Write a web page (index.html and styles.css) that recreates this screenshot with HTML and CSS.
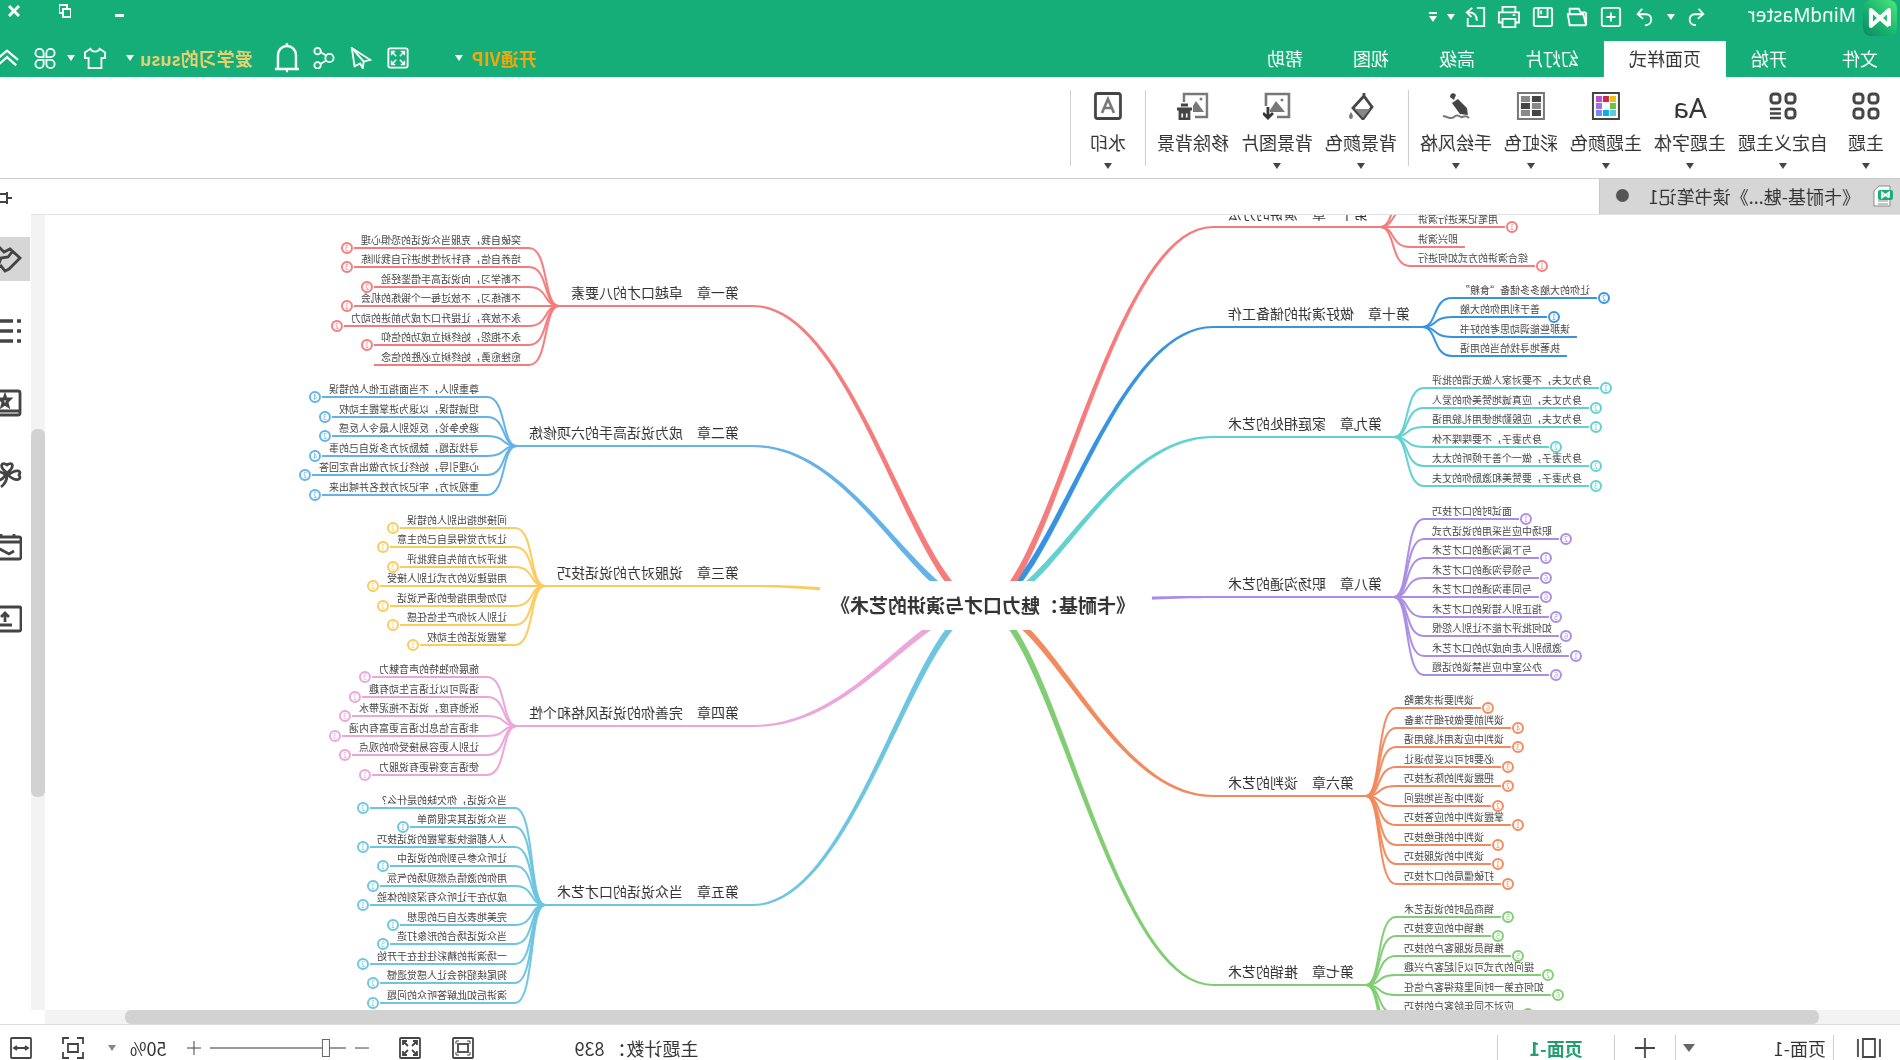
FILE: index.html
```html
<!DOCTYPE html>
<html lang="zh-CN">
<head>
<meta charset="utf-8">
<title>MindMaster</title>
<link rel="stylesheet" href="styles.css">
</head>
<body>
<div class="app">
  <header class="header">
    <div class="titlebar">
      <div class="brand">
        <svg class="logo" viewBox="0 0 34 36" aria-hidden="true">
          <defs><linearGradient id="lg" x1="0" y1="0" x2="1" y2="1"><stop offset="0" stop-color="#4fe87c"/><stop offset=".5" stop-color="#1cb870"/><stop offset="1" stop-color="#0a8a62"/></linearGradient></defs>
          <rect width="34" height="36" rx="8" fill="url(#lg)"/>
          <path d="M8 26V10l18 16V10L8 26" fill="none" stroke="#fff" stroke-width="4" stroke-linejoin="round"/>
        </svg>
        <span class="brand-name">MindMaster</span>
      </div>
      <div class="quick">
        <button class="cell narrow" aria-label="撤销"><svg class="ico" viewBox="0 0 24 24"><path d="M9 3L4 9l6 5M4 9h9c8 0 8 12-1 12"/></svg></button>
        <button class="cell mini" aria-label="撤销列表"><i class="caret"></i></button>
        <button class="cell" aria-label="重做"><svg class="ico" viewBox="0 0 24 24"><path d="M15 3l5 6-6 5M20 9h-9c-8 0-8 12 1 12"/></svg></button>
        <button class="cell" aria-label="新建"><svg class="ico" viewBox="0 0 24 24"><rect x="2" y="2" width="20" height="20" rx="2"/><path d="M12 7v10M7 12h10"/></svg></button>
        <button class="cell" aria-label="打开"><svg class="ico" viewBox="0 0 24 24"><path d="M2 21h18l2-12H5L2 21V8l1-1h5l2-4h10v6"/></svg></button>
        <button class="cell" aria-label="保存"><svg class="ico" viewBox="0 0 24 24"><rect x="2" y="2" width="20" height="20" rx="2"/><path d="M7 2v10h10V2M14 5v4"/></svg></button>
        <button class="cell" aria-label="打印"><svg class="ico" viewBox="0 0 24 24"><path d="M5 7V1h14v6M5 18H1V7h22v11h-4M5 14h14v9H5zM5 10h3"/></svg></button>
        <button class="cell narrow" aria-label="导出"><svg class="ico" viewBox="0 0 24 24"><path d="M11 2H3v20h18v-9M21 7c-7-1-10 4-10 9M16 2l6 5-5 5"/></svg></button>
        <button class="cell mini" aria-label="导出选项"><i class="caret"></i></button>
        <button class="cell mini more" aria-label="自定义快速访问"><i class="bar"></i><i class="caret"></i></button>
      </div>
      <div class="window-buttons">
        <button class="win" aria-label="最小化"><svg viewBox="0 0 12 14"><path d="M1 10h9v3H1z" fill="#fff"/></svg></button>
        <button class="win" aria-label="还原"><svg viewBox="0 0 12 14"><path d="M9 9h3V1H4v4M0 5h8v8H0z" fill="none" stroke="#fff" stroke-width="2"/></svg></button>
        <button class="win last" aria-label="关闭"><svg viewBox="0 0 12 14"><path d="M1 2l10 10M11 2L1 12" stroke="#fff" stroke-width="3"/></svg></button>
      </div>
    </div>
    <div class="menubar">
      <nav class="menus">
        <button class="menu file">文件</button>
        <button class="menu">开始</button>
        <button class="menu active">页面样式</button>
        <button class="menu">幻灯片</button>
        <button class="menu">高级</button>
        <button class="menu">视图</button>
        <button class="menu">帮助</button>
      </nav>
      <div class="account">
        <button class="vip">开通VIP<i class="caret"></i></button>
        <button class="tool" aria-label="全屏"><svg class="ico" viewBox="0 0 24 24"><rect x="1.5" y="1.5" width="21" height="21" rx="2"/><path d="M5 9V5h4M5 5l5 5M15 5h4v4M19 5l-5 5M5 15v4h4M5 19l5-5M19 15v4h-4M19 19l-5-5" stroke-width="1.6"/></svg></button>
        <button class="tool" aria-label="发送"><svg class="ico" viewBox="0 0 24 24"><path d="M22 1L2 14l7 2 1 7 3-5 6 3L22 1 9 16"/></svg></button>
        <button class="tool" aria-label="分享"><svg class="ico" viewBox="0 0 24 24"><circle cx="6" cy="12" r="4.500"/><circle cx="19" cy="4.500" r="3.500"/><circle cx="19" cy="20" r="3.500"/><path d="M9 9.500l7-4M9 14.500l7 4"/></svg></button>
        <button class="tool" aria-label="通知"><svg class="ico bell" viewBox="0 0 24 30"><path d="M3 26V12a9 9 0 0 1 18 0v14M0 26h24M12 0v3M11 28h2" stroke-width="2.400"/></svg></button>
        <button class="user">爱学习的susu<i class="caret"></i></button>
        <button class="pair" aria-label="皮肤"><svg class="ico wide" viewBox="0 0 26 24"><path d="M8 2L2 6v6h4v11h14V12h4V6l-6-4c-2 4-8 4-10 0z"/></svg><i class="caret"></i></button>
        <button class="apps" aria-label="应用"><svg class="ico wide" viewBox="0 0 26 24"><path d="M11.500 11H7a4.500 4.500 0 1 1 4.500-4.500zM14.500 11H19a4.500 4.500 0 1 0-4.500-4.500zM11.500 14H7a4.500 4.500 0 1 0 4.500 4.500zM14.500 14H19a4.500 4.500 0 1 1-4.500 4.500z"/></svg></button>
        <button class="fold" aria-label="收起功能区"><svg class="ico" viewBox="0 0 24 24"><path d="M0 14L12 4l12 10M2 20l10-9 10 9" stroke-width="2.400"/></svg></button>
      </div>
    </div>
  </header>

  <section class="ribbon" aria-label="页面样式">
    <div class="group">
      <button class="act first"><svg class="pic" viewBox="0 0 28 28"><g fill="none" stroke="#444" stroke-width="3"><rect x="2" y="2" width="9" height="9" rx="3"/><rect x="17" y="2" width="9" height="9" rx="3"/><rect x="2" y="17" width="9" height="9" rx="3"/><rect x="17" y="17" width="9" height="9" rx="3"/></g></svg>主题<i class="caret dark"></i></button>
      <button class="act"><svg class="pic" viewBox="0 0 28 28"><g fill="none" stroke="#444" stroke-width="3"><rect x="2" y="2" width="9" height="9" rx="3"/><rect x="17" y="2" width="9" height="9" rx="3"/><rect x="2" y="17" width="9" height="9" rx="3"/><path d="M16 17h11M16 21.500h11M16 26h11" stroke-width="2.400"/></g></svg>自定义主题<i class="caret dark"></i></button>
      <button class="act"><span class="aa" aria-hidden="true">Aa</span>主题字体<i class="caret dark"></i></button>
      <button class="act"><svg class="pic" viewBox="0 0 28 28"><rect x="1" y="1" width="26" height="26" fill="#fff" stroke="#444" stroke-width="2"/><path d="M4 4h6v6H4z" fill="#e8c010"/><path d="M11 4h6v6h-6z" fill="#cf2552"/><path d="M18 4h6v6h-6z" fill="#c050d0"/><path d="M4 11h6v6H4z" fill="#6cc04a"/><path d="M18 11h6v6h-6z" fill="#a070e0"/><path d="M4 18h6v6H4z" fill="#60c8d8"/><path d="M11 18h6v6h-6z" fill="#00b0f0"/><path d="M18 18h6v6h-6z" fill="#7088f8"/></svg>主题颜色<i class="caret dark"></i></button>
      <button class="act"><svg class="pic" viewBox="0 0 28 28"><rect x="1" y="1" width="26" height="26" fill="#fff" stroke="#777" stroke-width="2"/><path d="M4 4h9v6H4zM15 11h9v6h-9zM4 18h9v6H4z" fill="#444"/><path d="M15 4h9v6h-9zM4 11h9v6H4zM15 18h9v6h-9z" fill="#888"/></svg>彩虹色<i class="caret dark"></i></button>
      <button class="act"><svg class="pic" viewBox="0 0 28 28"><path d="M14 3c2-3 6-2 6 2l-4 3zM12 7l6 4-8 11-8 1 1-7z" fill="#444"/><path d="M1 26c4-4 6 0 8-1s4-3 7 0 5 0 11-1" fill="none" stroke="#777" stroke-width="2"/></svg>手绘风格<i class="caret dark"></i></button>
    </div>
    <div class="group">
      <button class="act"><svg class="pic" viewBox="0 0 28 28"><path d="M11 1v5M11 4l11 12-10 11L3 15z" fill="none" stroke="#444" stroke-width="2.800"/><path d="M5 17h15l-8 9z" fill="#888"/><path d="M24 20c3 4 2 7 0 7s-3-3 0-7z" fill="#777"/></svg>背景颜色<i class="caret dark"></i></button>
      <button class="act"><svg class="pic" viewBox="0 0 28 28"><path d="M14 25H2V2h23v12" fill="none" stroke="#777" stroke-width="2.600"/><path d="M6 20l9-11 6 9v2z" fill="#777"/><circle cx="9" cy="8" r="1.500" fill="#777"/><path d="M23 15v11M18 21l5 5 5-5" fill="none" stroke="#333" stroke-width="2.800"/></svg>背景图片<i class="caret dark"></i></button>
      <button class="act"><svg class="pic remove" viewBox="0 0 32 28"><path d="M14 25H2V2h23v8" fill="none" stroke="#777" stroke-width="2.400"/><path d="M5 20l8-11 3 5v6z" fill="#777"/><circle cx="8" cy="7" r="1.500" fill="#777"/><path d="M17 17h15M21 13h7M20 20v7h9v-7zM24.500 19v8" fill="none" stroke="#444" stroke-width="2.800"/></svg>移除背景<i class="caret none"></i></button>
    </div>
    <div class="group">
      <button class="act water"><svg class="pic" viewBox="0 0 28 28"><rect x="1.500" y="1.500" width="25" height="25" rx="2" fill="none" stroke="#444" stroke-width="2.800"/><path d="M8 21l6-14 6 14M10 16h8" fill="none" stroke="#777" stroke-width="2.600"/></svg>水印<i class="caret dark"></i></button>
    </div>
  </section>

  <div class="work">
    <main class="stage">
      <div class="doc-tabs">
        <button class="doc-tab">
          <svg class="doc-icon" viewBox="0 0 20 22"><path d="M3 1h11l5 5v15H3z" fill="#fff" stroke="#888"/><path d="M5 16h10M5 19h10" stroke="#888"/><rect x="0" y="5" width="15" height="10" rx="2" fill="#12b07a"/><path d="M4 12.500V7.500l7 5V7.500l-7 5" fill="none" stroke="#fff" stroke-width="1.800"/></svg>
          <span class="doc-name">《卡耐基-魅...》读书笔记1</span>
          <i class="dot"></i>
        </button>
      </div>
      <div class="view">
        <div class="board">
        <svg class="map" id="map" role="img" aria-label="思维导图"></svg>
        </div>
        <div class="vscroll"><i class="pad-top"></i><i class="thumb"></i><i class="pad-bottom"></i></div>
      </div>
      <div class="hscroll"><i class="pad-left"></i><i class="thumb"></i><i class="pad-right"></i></div>
    </main>
    <aside class="side">
      <button class="pin" aria-label="固定"><svg viewBox="0 0 24 14"><path d="M0 7h5M5 1v12M5 3h13v8H5M18 1v12" fill="none" stroke="#444" stroke-width="2"/></svg></button>
      <button class="panel on" aria-label="样式"><svg viewBox="0 0 28 28"><path d="M2 13L12 4l6 3 4-4 8 8v7l-6 5-3-2-4 5-4-2zM10 7l4 5 7 1 3 8"/></svg></button>
      <button class="panel" aria-label="大纲"><svg viewBox="0 0 28 28"><path d="M9 4h19M9 14h19M9 24h19M1 4h4M1 14h4M1 24h4" stroke-width="3.600"/></svg></button>
      <button class="panel" aria-label="图标"><svg viewBox="0 0 28 28"><rect x="2" y="2" width="26" height="24" rx="2"/><path d="M2 22h26M17 7l1 3h4l-3 3 1 4-3-2-3 2 1-4-3-3h4z"/></svg></button>
      <button class="panel" aria-label="剪贴画"><svg viewBox="0 0 28 28"><path d="M15 12c-9-7-5-12 0-8 5-4 9 1 0 8zM14 14C5 7 0 10 3 14c-3 4 2 8 11 0zM16 14c9-6 12-3 9 1 3 5-2 7-9-1zM15 14c0 5 2 9 6 12"/></svg></button>
      <button class="panel" aria-label="任务"><svg viewBox="0 0 28 28"><rect x="1" y="4" width="27" height="22" rx="2"/><path d="M1 9h27M8 1v4M21 1v4M8 18l5 3 11-6"/></svg></button>
      <button class="panel" aria-label="附件"><svg viewBox="0 0 28 28"><rect x="1" y="2" width="27" height="24" rx="2"/><path d="M10 20h14M17 17V8M13 12l4-4 4 4"/></svg></button>
    </aside>
  </div>

  <footer class="status">
    <button class="st pages" aria-label="页面列表"><svg viewBox="0 0 24 22"><path d="M1 2v18M23 2v18M6 2h12v18H6z"/></svg></button>
    <label class="page-pick"><select class="page-select" aria-label="页面"><option>页面-1</option></select><i class="caret big"></i></label>
    <button class="st add" aria-label="新增页面"><svg viewBox="0 0 20 20"><path d="M10 0v20M0 10h20"/></svg></button>
    <button class="page-tab">页面-1</button>
    <span class="spacer"></span>
    <span class="count">主题计数： 839</span>
    <button class="st" aria-label="适合窗口"><svg viewBox="0 0 22 22"><rect x="1" y="1" width="20" height="20" rx="1"/><rect x="6" y="7" width="10" height="8"/><path d="M4 7V4h3M15 4h3v3M4 15v3h3M15 18h3v-3" stroke-width="1"/></svg></button>
    <button class="st full" aria-label="全屏显示"><svg viewBox="0 0 22 22"><rect x="1" y="1" width="20" height="20" rx="1"/><path d="M4 8V4h4M4 4l5 5M14 4h4v4M18 4l-5 5M4 14v4h4M4 18l5-5M18 14v4h-4M18 18l-5-5"/></svg></button>
    <button class="st sign" aria-label="缩小"><svg viewBox="0 0 14 14"><path d="M0 7h14"/></svg></button>
    <input class="zoom" type="range" min="0" max="100" value="12" aria-label="缩放">
    <button class="st sign" aria-label="放大"><svg viewBox="0 0 14 14"><path d="M0 7h14M7 0v14"/></svg></button>
    <button class="percent">50%<i class="caret grey"></i></button>
    <button class="st page-fit" aria-label="适合页面"><svg viewBox="0 0 22 22"><path d="M1 7V1h6M15 1h6v6M1 15v6h6M15 21h6v-6M6 7h10v8H6z"/></svg></button>
    <button class="st fit" aria-label="适合宽度"><svg viewBox="0 0 22 22"><rect x="1" y="1" width="20" height="20" rx="1"/><path d="M4 11h14M7 9l-3 2 3 2M15 9l3 2-3 2"/></svg></button>
  </footer>
</div>
<script src="map.js"></script>
</body>
</html>
```
FILE: styles.css
```css
* { box-sizing: border-box; }

body {
  margin: 0;
  overflow: hidden;
  background: #fff;
  color: #333;
  font: 18px/24px "Noto Sans CJK SC", sans-serif;
}

button {
  display: flex;
  align-items: center;
  justify-content: center;
  padding: 0;
  border: 0;
  background: none;
  color: inherit;
  font: inherit;
  white-space: nowrap;
}

svg { display: block; flex: none; }

/* the whole window is shown as in a mirror */
.app {
  display: flex;
  flex-direction: column;
  height: 100vh;
  transform: scaleX(-1);
}

/* carets */
.caret {
  flex: none;
  border: 4px solid transparent;
  border-top: 6px solid #fff;
  border-bottom: 0;
}
.caret.dark { border-top-color: #444; }
.caret.grey { border-top-color: #888; }
.caret.big { border-width: 8px 6px 0; border-top-color: #666; }
.caret.none { visibility: hidden; }
.more { flex-direction: column; gap: 2px; }
.bar { width: 8px; height: 2px; background: #fff; }

/* header */
.header { flex: none; background: #16ae78; color: #fff; }
.titlebar { display: flex; height: 41px; padding-left: 3px; }
.brand { display: flex; align-items: flex-start; gap: 7px; width: 185px; }
.logo { width: 34px; height: 36px; }
.brand-name { font: 19px/30px "Noto Sans", sans-serif; }
.quick { display: flex; height: 34px; }
.cell { width: 34px; }
.cell.narrow { width: 32px; }
.cell.mini { width: 18px; }
.ico {
  width: 22px;
  height: 22px;
  fill: none;
  stroke: #fff;
  stroke-width: 2;
}
.ico.wide { width: 24px; }
.ico.bell { width: 24px; height: 30px; }
.window-buttons { display: flex; height: 22px; margin-left: auto; }
.win { width: 54px; }
.win svg { width: 12px; height: 14px; }
.win.last { width: 38px; padding-left: 18px; justify-content: flex-start; }

.menubar { display: flex; justify-content: space-between; height: 36px; }
.menus { display: flex; }
.menu { padding: 0 25px 2px; }
.menu.file { padding: 0 30px 2px 22px; }
.menu.active { background: #fff; color: #333; }
.account { display: flex; overflow: hidden; padding-bottom: 2px; }
.vip { gap: 9px; margin-right: 38px; color: #f5a60a; font-weight: 700; }
.tool { width: 37px; }
.user { gap: 6px; margin: 0 19px 0 16px; color: #e6d070; font-weight: 700; }
.pair { gap: 8px; }
.apps { margin: 0 13px 0 10px; }
.fold { width: 20px; justify-content: flex-start; overflow: hidden; }
.fold .ico { width: 26px; }

/* ribbon */
.ribbon {
  display: flex;
  flex: none;
  height: 102px;
  padding-top: 13px;
  border-bottom: 1px solid #ccc;
}
.group {
  display: flex;
  gap: 12px;
  height: 76px;
  padding: 0 11px;
  border-right: 1px solid #ccc;
}
.act { flex-direction: column; justify-content: flex-start; line-height: 26px; padding-top: 2px; }
.act.first { margin: 0 8px 0 5px; }
.act.water { margin: 0 8px; }
.pic { width: 28px; height: 28px; margin-bottom: 9px; }
.pic.remove { width: 32px; }
.aa { height: 28px; margin-bottom: 9px; font: 28px/30px "Noto Sans", sans-serif; }
.act .caret { margin-top: 8px; }

/* document area */
.work { display: flex; flex: 1; min-height: 0; }
.stage { display: flex; flex: 1; flex-direction: column; min-width: 0; }
.doc-tabs { flex: none; height: 36px; border-bottom: 1px solid #e2e2e2; }
.doc-tab {
  justify-content: flex-start;
  width: 301px;
  height: 35px;
  padding: 0 0 2px 7px;
  background: #d6d6d6;
  border-right: 1px solid #c8c8c8;
}
.doc-icon { width: 20px; height: 22px; margin-right: 13px; }
.doc-name { flex: 1; text-align: left; }
.dot { width: 13px; height: 13px; margin-right: 16px; border-radius: 50%; background: #555; }
.view { display: flex; flex: 1; min-height: 0; }
.board { flex: 1; min-width: 0; overflow: hidden; }
.map { width: 100%; height: 100%; }
.vscroll { display: flex; flex-direction: column; width: 14px; background: #f3f3f3; }
.hscroll { display: flex; flex: none; height: 14px; margin-right: 14px; background: #f3f3f3; }
.thumb { border-radius: 6px; background: #d2d2d2; }
.pad-top { flex: 214; }
.vscroll .thumb { flex: 368; }
.pad-bottom { flex: 213; }
.pad-left { flex: 81; }
.hscroll .thumb { flex: 1694; }
.pad-right { flex: 80; }

/* mind map */
.topic { fill: #333; font-size: 14px; }
.leaf { fill: #444; font-size: 10px; }
.line { fill: none; stroke: currentColor; stroke-width: 2; }
.taper { fill: currentColor; }
.badge { fill: #fff; stroke: currentColor; stroke-width: 2; }
.badge-text { fill: currentColor; font-size: 7px; text-anchor: middle; }
.root-box { fill: #fff; }
.root-text { fill: #333; font-size: 19px; font-weight: 700; text-anchor: middle; }
.end { text-anchor: end; }

/* side panel */
.side { display: flex; flex: none; flex-direction: column; gap: 28px; width: 31px; overflow: hidden; }
.pin { justify-content: flex-start; height: 30px; padding: 8px 0 0 19px; }
.pin svg { width: 24px; height: 14px; }
.panel { justify-content: flex-start; height: 44px; margin-left: 1px; padding-left: 8px; }
.panel.on { background: #d6d6d6; }
.panel svg { width: 28px; height: 28px; fill: none; stroke: #444; stroke-width: 2.8; }

/* status bar */
.status {
  display: flex;
  flex: none;
  align-items: center;
  height: 36px;
  padding-top: 10px;
  border-top: 1px solid #ddd;
}
.st { width: 52px; height: 24px; }
.st svg { width: 22px; height: 22px; fill: none; stroke: #444; stroke-width: 1.8; }
.st.pages { width: 67px; height: 26px; padding-right: 4px; border-right: 1px solid #ccc; }
.st.pages svg { width: 24px; }
.page-pick { display: flex; align-items: center; width: 158px; height: 26px; padding: 0 7px; border-right: 1px solid #ccc; }
.page-select {
  flex: 1;
  padding: 0;
  border: 0;
  background: none;
  color: #333;
  font: inherit;
  appearance: none;
}
.st.add { width: 61px; height: 26px; border-right: 1px solid #ccc; }
.st.add svg { width: 20px; height: 20px; }
.page-tab { width: 117px; height: 26px; border-right: 1px solid #ccc; color: #1f9c70; font-weight: 700; }
.spacer { flex: 1; }
.count { margin-right: 86px; white-space: pre; }
.st.full { width: 53px; margin-right: 6px; }
.st.sign { width: 32px; }
.st.sign svg { width: 14px; height: 14px; stroke-width: 1; }
.zoom { width: 136px; height: 18px; margin: 0; background: none; appearance: none; }
.zoom::-webkit-slider-runnable-track { height: 2px; background: #999; }
.zoom::-webkit-slider-thumb {
  width: 8px;
  height: 18px;
  margin-top: -8px;
  border: 1px solid #666;
  background: #fff;
  appearance: none;
}
.percent { gap: 14px; margin: 0 5px 0 11px; }
.st.page-fit { width: 60px; }
.st.fit { width: 43px; }
```
FILE: map.js
```js
const SVG = "http://www.w3.org/2000/svg";
const map = document.getElementById("map");

// root node centre, branch geometry
const ROOT = { x: 917, y: 391, w: 332, h: 49, text: "《卡耐基：魅力口才与演讲的艺术》" };
const STEP = 19.5;

// side: 1 grows to the right of the root, -1 to the left
const branches = [
  { side: 1, y: 91, color: "#f47c7c", text: "第一章　卓越口才的八要素", items: [
    ["突破自我，克服当众说话的恐惧心理", 3], ["培养自信，有针对性地进行自我训练", 3],
    ["不断学习，向说话高手借鉴经验", 2], ["不断练习，不放过每一个锻炼的机会", 1],
    ["永不放弃，让提升口才成为前进的动力", 2], ["永不抱怨，始终树立成功的信仰", 1],
    ["愈挫愈勇，始终树立必胜的信念"]] },
  { side: 1, y: 231, color: "#64b2e8", text: "第二章　成为说话高手的六项修炼", items: [
    ["尊重别人，不当面指正他人的错误", 4], ["坦诚错误，以退为进掌握主动权", 3],
    ["避免争论，反驳别人最令人反感", 2], ["寻找话题，鼓励对方多说自己的事", 4],
    ["心理引导，始终让对方做出肯定回答", 2], ["重视对方，牢记对方姓名并喊出来", 2]] },
  { side: 1, y: 371, color: "#fbcb5c", text: "第三章　说服对方的说话技巧", items: [
    ["间接地指出别人的错误", 2], ["让对方觉得是自己的主意", 1], ["批评对方前先自我批评", 3],
    ["用提建议的方式让别人接受", 2], ["切勿使用指使的语气说话", 2], ["让别人对你产生信任感", 1],
    ["掌握说话的主动权", 1]] },
  { side: 1, y: 511, color: "#eba6da", text: "第四章　完善你的说话风格和个性", items: [
    ["施展你独特的声音魅力", 3], ["语调可以让语言生动有趣", 2], ["张弛有度，说话不拖泥带水", 3],
    ["非语言信息比语言更富有内涵", 3], ["让别人更容易接受你的观点", 2], ["使语言变得更有说服力", 1]] },
  { side: 1, y: 690, color: "#6ec5df", text: "第五章　当众说话的口才艺术", items: [
    ["当众说话，你欠缺的是什么？", 2], ["当众说话其实很简单", 1], ["人人都能快速掌握的说话技巧", 1],
    ["让听众参与到你的说话中", 1], ["用你的激情点燃现场的气氛", 1], ["成功在于让听众有深刻的体验", 1],
    ["完美地表达自己的思想", 1], ["当众说话场合的形象打造", 5], ["一场演讲的精彩往往在于开始", 2],
    ["狗尾续貂将会让人感觉遗憾", 2], ["演讲后如此解答听众的问题", 1]] },
  { side: -1, y: 581, color: "#f28a5f", text: "第六章　谈判的艺术", items: [
    ["谈判要讲求策略", 6], ["谈判前要做好细节准备", 4], ["谈判中应该用礼貌用语", 3],
    ["必要时可以妥协退让", 3], ["把握谈判的陈述技巧", 2], ["谈判中适当地提问", 2],
    ["掌握谈判中的应答技巧", 1], ["谈判中的拒绝技巧", 1], ["谈判中的说服技巧", 1],
    ["打破僵局的口才技巧", 3]] },
  { side: -1, y: 770, color: "#82cd74", text: "第七章　推销的艺术", items: [
    ["销商品时的说话艺术", 5], ["推销中的应变技巧", 5], ["推销员说服客户的技巧", 5],
    ["提问的方式可以引起客户兴趣", 2], ["如何在第一时间里获得客户信任", 6],
    ["应对不同年龄客户的技巧", 5], [""], [""]] },
  { side: -1, y: 382, color: "#a98ee3", text: "第八章　职场沟通的艺术", items: [
    ["面试时的口才技巧", 1], ["职场中应当采用的说话方式", 2], ["与下属沟通的口才艺术", 1],
    ["与领导沟通的口才艺术", 6], ["与同事沟通的口才艺术", 6], ["指正别人错误的口才艺术", 5],
    ["如何批评才能不让别人怨恨", 6], ["激励别人走向成功的口才艺术", 1], ["办公室中应当禁谈的话题", 6]] },
  { side: -1, y: 222, color: "#62d1d0", text: "第九章　家庭相处的艺术", items: [
    ["身为丈夫，不要对家人做无谓的批评", 1], ["身为丈夫，应真诚地赞美你的爱人", 2],
    ["身为丈夫，应殷勤地使用礼貌用语", 1], ["身为妻子，不要喋喋不休", 2],
    ["身为妻子，做一个善于倾听的太太", 2], ["身为妻子，要赞美和激励你的丈夫", 3]] },
  { side: -1, y: 112, color: "#3793e0", text: "第十章　做好演讲的储备工作", items: [
    ["让你的大脑多多储备“食粮”", 2], ["善于利用你的大脑", 1],
    ["读那些能调动思考的好书"], ["执著地寻找恰当的用语"]] },
  { side: -1, y: 12, color: "#f47c7c", text: "第十一章　演讲的方法", items: [
    [""], [""], ["用笔记来进行演讲", 1], ["即兴演讲"], ["综合演讲的方式如何进行", 1]] }
];

function add(parent, name, attrs, text) {
  const el = document.createElementNS(SVG, name);
  for (const key in attrs) el.setAttribute(key, attrs[key]);
  if (text) el.textContent = text;
  parent.appendChild(el);
  return el;
}

// outline of a cubic curve whose width shrinks from w0 to w1
function taper(p, w0, w1) {
  const a = [], b = [];
  for (let i = 0; i <= 40; i++) {
    const t = i / 40, u = 1 - t;
    const x = u * u * u * p[0][0] + 3 * u * u * t * p[1][0] + 3 * u * t * t * p[2][0] + t * t * t * p[3][0];
    const y = u * u * u * p[0][1] + 3 * u * u * t * p[1][1] + 3 * u * t * t * p[2][1] + t * t * t * p[3][1];
    const dx = u * u * (p[1][0] - p[0][0]) + 2 * u * t * (p[2][0] - p[1][0]) + t * t * (p[3][0] - p[2][0]);
    const dy = u * u * (p[1][1] - p[0][1]) + 2 * u * t * (p[2][1] - p[1][1]) + t * t * (p[3][1] - p[2][1]);
    const n = Math.hypot(dx, dy), h = (w0 + (w1 - w0) * t) / 2;
    a.push([x - dy / n * h, y + dx / n * h]);
    b.unshift([x + dy / n * h, y - dx / n * h]);
  }
  return a.concat(b).map(q => q[0].toFixed(1) + "," + q[1].toFixed(1)).join(" ");
}

for (const br of branches) {
  const s = br.side, y = br.y;
  const g = add(map, "g", { color: br.color });
  const start = s > 0 ? 1147 : 687;
  const near = s > 0 ? 1161 : 672;
  const far = near + s * br.text.length * 14;
  const joint = far + s * 14;
  const anchor = s > 0 ? "" : " end";

  add(g, "polygon", { class: "taper", points: taper(
    [[ROOT.x, ROOT.y], [ROOT.x + s * 66, ROOT.y], [start - s * 104, y], [start, y]], 7, 2) });
  add(g, "path", { class: "line", d: `M${start} ${y}H${joint}` });
  add(g, "text", { class: "topic" + anchor, x: near, y: y - 8 }, br.text);

  br.items.forEach(([text, count], i) => {
    const cy = Math.round(y + (i - (br.items.length - 1) / 2) * STEP);
    const tx = far + s * 50, edge = tx + s * text.length * 10;
    add(g, "path", { class: "line",
      d: `M${joint - s * 2} ${y}C${joint + s * 14} ${y} ${joint + s * 8} ${cy} ${tx - s * 8} ${cy}H${edge + s * 7}` });
    if (text) add(g, "text", { class: "leaf" + anchor, x: tx, y: cy - 4 }, text);
    if (count) {
      const cx = edge + s * 14;
      add(g, "circle", { class: "badge", cx, cy, r: 5 });
      add(g, "text", { class: "badge-text", x: cx, y: cy + 3 }, String(count));
    }
  });
}

add(map, "rect", { class: "root-box", x: ROOT.x - 169, y: ROOT.y - 25, width: ROOT.w, height: ROOT.h });
add(map, "text", { class: "root-text", x: ROOT.x, y: ROOT.y + 7 }, ROOT.text);
```
